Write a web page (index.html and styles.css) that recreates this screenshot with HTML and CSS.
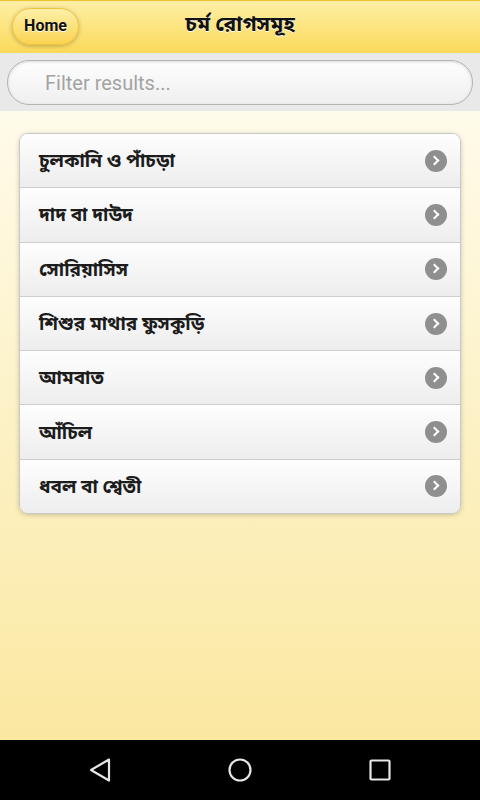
FILE: index.html
```html
<!DOCTYPE html>
<html lang="bn">
<head>
    <meta charset="UTF-8">
    <meta name="viewport" content="width=device-width, initial-scale=1.0">
    <title>চর্ম রোগসমূহ</title>
    <link rel="stylesheet" href="styles.css">
</head>
<body>
    <div class="page">
        <!-- Header -->
        <div class="header">
            <a class="btn-home" href="#">Home</a>
            <h1 class="title">চর্ম রোগসমূহ</h1>
        </div>

        <!-- Filter -->
        <div class="filter-bar">
            <input type="text" class="filter-input" placeholder="Filter results...">
        </div>

        <!-- List -->
        <div class="content">
            <ul class="list">
                <li><a href="#"><span>চুলকানি ও পাঁচড়া</span><i class="arrow"></i></a></li>
                <li><a href="#"><span>দাদ বা দাউদ</span><i class="arrow"></i></a></li>
                <li><a href="#"><span>সোরিয়াসিস</span><i class="arrow"></i></a></li>
                <li><a href="#"><span>শিশুর মাথার ফুসকুড়ি</span><i class="arrow"></i></a></li>
                <li><a href="#"><span>আমবাত</span><i class="arrow"></i></a></li>
                <li><a href="#"><span>আঁচিল</span><i class="arrow"></i></a></li>
                <li><a href="#"><span>ধবল বা শ্বেতী</span><i class="arrow"></i></a></li>
            </ul>
        </div>

        <!-- Android nav bar -->
        <div class="navbar">
            <svg width="26" height="26" viewBox="0 0 26 26"><path d="M22 2.5 L4 13 L22 23.5 Z" fill="none" stroke="#e6e6e6" stroke-width="2.2" stroke-linejoin="round"/></svg>
            <svg width="26" height="26" viewBox="0 0 26 26"><circle cx="13" cy="13" r="10.5" fill="none" stroke="#e6e6e6" stroke-width="2.2"/></svg>
            <svg width="26" height="26" viewBox="0 0 26 26"><rect x="3.5" y="3.5" width="19" height="19" rx="1" fill="none" stroke="#e6e6e6" stroke-width="2.2"/></svg>
        </div>
    </div>
</body>
</html>
```

FILE: styles.css
```css
/* General Styles */
html, body {
    margin: 0;
    padding: 0;
    height: 100%;
}

body {
    font-family: Roboto, "Noto Sans Bengali", "Noto Sans", sans-serif;
    color: #222;
}

.page {
    display: flex;
    flex-direction: column;
    height: 800px;
}

/* Header */
.header {
    height: 52px;
    border-top: 1px solid #f2c12e;
    background: linear-gradient(#fdefa5, #fbd95a);
    display: flex;
    align-items: center;
    justify-content: center;
    position: relative;
}

.btn-home {
    position: absolute;
    left: 12px;
    top: 7px;
    width: 67px;
    height: 37px;
    box-sizing: border-box;
    border: 1px solid #f0c33c;
    border-radius: 19px;
    background: linear-gradient(#fdf0a8, #fbd352);
    box-shadow: 0 1px 4px rgba(0, 0, 0, 0.25);
    display: flex;
    align-items: center;
    justify-content: center;
    padding-bottom: 2px;
    font-size: 16px;
    font-weight: bold;
    color: #111;
    text-decoration: none;
    text-shadow: 0 1px 0 #fff;
}

.title {
    margin: 0 0 2px;
    font-size: 21px;
    font-weight: bold;
    color: #111;
    text-shadow: 0 1px 0 #fff;
}

/* Filter */
.filter-bar {
    background: #e9e9e9;
    padding: 7px 7px 6px;
}

.filter-input {
    display: block;
    width: 100%;
    height: 45px;
    box-sizing: border-box;
    border: 1px solid #b5b5b5;
    border-radius: 22px;
    background: linear-gradient(#fefefe, #efefef);
    box-shadow: inset 0 1px 3px rgba(0, 0, 0, 0.15);
    padding: 0 0 0 37px;
    font-family: Roboto, sans-serif;
    font-size: 20px;
    color: #333;
    outline: none;
}

.filter-input::placeholder {
    color: #a3a3a3;
}

/* Content */
.content {
    flex: 1;
    background: linear-gradient(#fffbea, #fae8a1);
    padding: 22px 19px;
}

.list {
    list-style: none;
    margin: 0;
    padding: 0;
    border: 1px solid #c8c8c8;
    border-radius: 9px;
    overflow: hidden;
    box-shadow: 0 1px 5px rgba(0, 0, 0, 0.2);
}

.list li + li {
    border-top: 1px solid #cecece;
}

.list a {
    display: flex;
    align-items: center;
    justify-content: space-between;
    height: 53.3px;
    padding: 0 13px 0 19px;
    background: linear-gradient(#fefefe, #ededed);
    color: #1c1c1c;
    text-decoration: none;
    font-size: 19px;
    font-weight: bold;
}

.list a span {
    padding-top: 3px;
}

.arrow {
    width: 22px;
    height: 22px;
    border-radius: 50%;
    background: #8f8f8f;
    position: relative;
}

.arrow::after {
    content: "";
    position: absolute;
    left: 6px;
    top: 7px;
    width: 5px;
    height: 5px;
    border-right: 2.5px solid #fff;
    border-top: 2.5px solid #fff;
    transform: rotate(45deg);
}

/* Navigation bar */
.navbar {
    height: 60px;
    background: #000;
    display: flex;
    align-items: center;
    justify-content: space-between;
    padding: 0 87px;
}
```
